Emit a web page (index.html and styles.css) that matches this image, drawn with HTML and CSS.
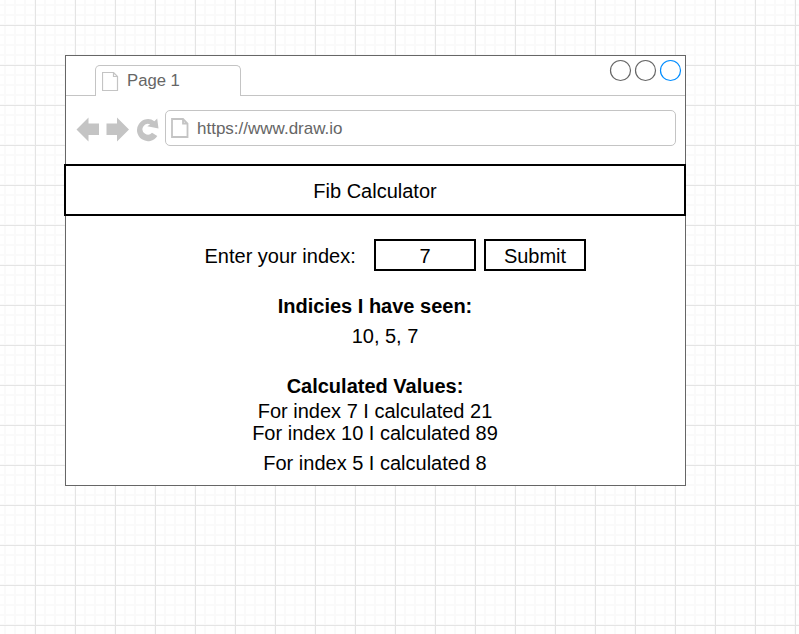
FILE: index.html
```
<!DOCTYPE html>
<html lang="en">
<head>
<meta charset="utf-8">
<title>Fib Calculator</title>
<link rel="stylesheet" href="styles.css">
</head>
<body>
<main class="window">
  <div class="tabs">
    <div class="tab-gap"></div>
    <div class="tab">
      <svg class="tab-page" width="17" height="20" viewBox="0 0 17 20"><path d="M.5.5H11.500L15.500 4.500V18.500H.5ZM11.500 .5V4.500H15.500"/></svg>
      <span>Page 1</span>
    </div>
    <div class="controls">
      <svg width="75" height="24" viewBox="0 0 75 24"><circle cx="11.5" cy="11.5" r="10"/><circle cx="36.5" cy="11.5" r="10"/><circle class="active" cx="61.5" cy="11.5" r="10"/></svg>
    </div>
  </div>
  <div class="toolbar">
    <svg class="nav" width="84" height="26" viewBox="0 0 84 26">
      <path d="M.5 13.500 12.500 1.500V7.500H23V19H12.500V25.500Z"/>
      <path d="M53 13.500 41 1.500V7.500H30.500V19H41V25.500Z"/>
      <path d="M78.400 5.200 81.200 2.400 82.500 12.400 71.300 10.300 74.200 8.300A5.400 5.400 0 1 0 76 16.800L81.300 20A11 11 0 1 1 78.400 5.200Z"/>
    </svg>
    <div class="address">
      <svg class="address-page" width="18" height="21" viewBox="0 0 18 21"><path d="M1 1H12L16.500 5.500V19H1ZM12 1V5.500H16.500"/></svg>
      <span>https://www.draw.io</span>
    </div>
  </div>
  <h1 class="header">Fib Calculator</h1>
  <div class="form">
    <span class="label">Enter your index:</span>
    <div class="box">7</div>
    <div class="box">Submit</div>
  </div>
  <section class="seen">
    <h2>Indicies I have seen:</h2>
    <p>10, 5, 7</p>
  </section>
  <section class="values">
    <h2>Calculated Values:</h2>
    <p>For index 7 I calculated 21</p>
    <p>For index 10 I calculated 89</p>
    <p class="last">For index 5 I calculated 8</p>
  </section>
</main>
</body>
</html>
```
FILE: styles.css
```
* { box-sizing: border-box; }

body {
  margin: 0;
  padding: 55px 0 0 65px;
  height: 634px;
  overflow: hidden;
  color: #000;
  font: 20px/22px "Liberation Sans", Arial, sans-serif;
  background-color: #fff;
  background-image:
    linear-gradient(90deg, #e4e4e4 1px, transparent 1px),
    linear-gradient(#e4e4e4 1px, transparent 1px),
    linear-gradient(90deg, #fafafa 2px, transparent 2px),
    linear-gradient(#fafafa 2px, transparent 2px);
  background-size: 40px 40px, 40px 40px, 10px 10px, 10px 10px;
  background-position: 35px 25px, 35px 25px, 4px 4px, 4px 4px;
}

h1, h2, p { margin: 0; font-size: 20px; }
svg { display: block; fill: none; flex: none; }

.window {
  width: 621px;
  height: 431px;
  background: #fff;
  border: 1px solid #666;
}

.tabs { display: flex; height: 40px; }
.tab-gap { width: 29px; border-bottom: 1px solid #c4c4c4; }
.tab {
  display: flex;
  width: 146px;
  height: 31px;
  margin-top: 9px;
  padding: 6px 0 0 6px;
  border: 1px solid #c4c4c4;
  border-bottom: 0;
  border-radius: 5px 5px 0 0;
  color: #666;
  font-size: 16.700px;
  line-height: 18px;
}
.tab span { margin-left: 8px; }
.tab-page { stroke: #c4c4c4; stroke-width: 1.2; }
.controls {
  display: flex;
  flex: 1;
  justify-content: flex-end;
  padding-top: 3px;
  border-bottom: 1px solid #c4c4c4;
}
.controls svg { margin-right: 1px; stroke: #666; stroke-width: 1.2; }
.controls .active { stroke: #008cff; }

.toolbar { display: flex; height: 68px; padding: 14px 9px 0 10px; }
.nav { margin: 6px 5px 0 0; fill: #c4c4c4; }
.address {
  display: flex;
  flex: 1;
  height: 36px;
  padding: 7px 0 0 5px;
  border: 1px solid #c4c4c4;
  border-radius: 5px;
  color: #666;
  font-size: 17px;
  line-height: 21px;
}
.address span { margin-left: 8px; }
.address-page { stroke: #c4c4c4; stroke-width: 1.8; }

.header {
  height: 52px;
  margin: 0 -1px 0 -2px;
  border: 2px solid #000;
  font-weight: 400;
  line-height: 50px;
  text-align: center;
}

.form { display: flex; gap: 8px; margin: 23px 0 0 138.500px; }
.label { width: 161.500px; line-height: 34px; }
.box { width: 102px; height: 32px; border: 2px solid #000; line-height: 30px; text-align: center; }

.seen { margin: 22px 1px 0 0; text-align: center; }
.seen p { margin: 8px 0 0 20px; }
.values { margin: 28px 1px 0 0; text-align: center; }
.values h2 { margin-bottom: 3px; }
.values .last { margin-top: 8px; }
```
